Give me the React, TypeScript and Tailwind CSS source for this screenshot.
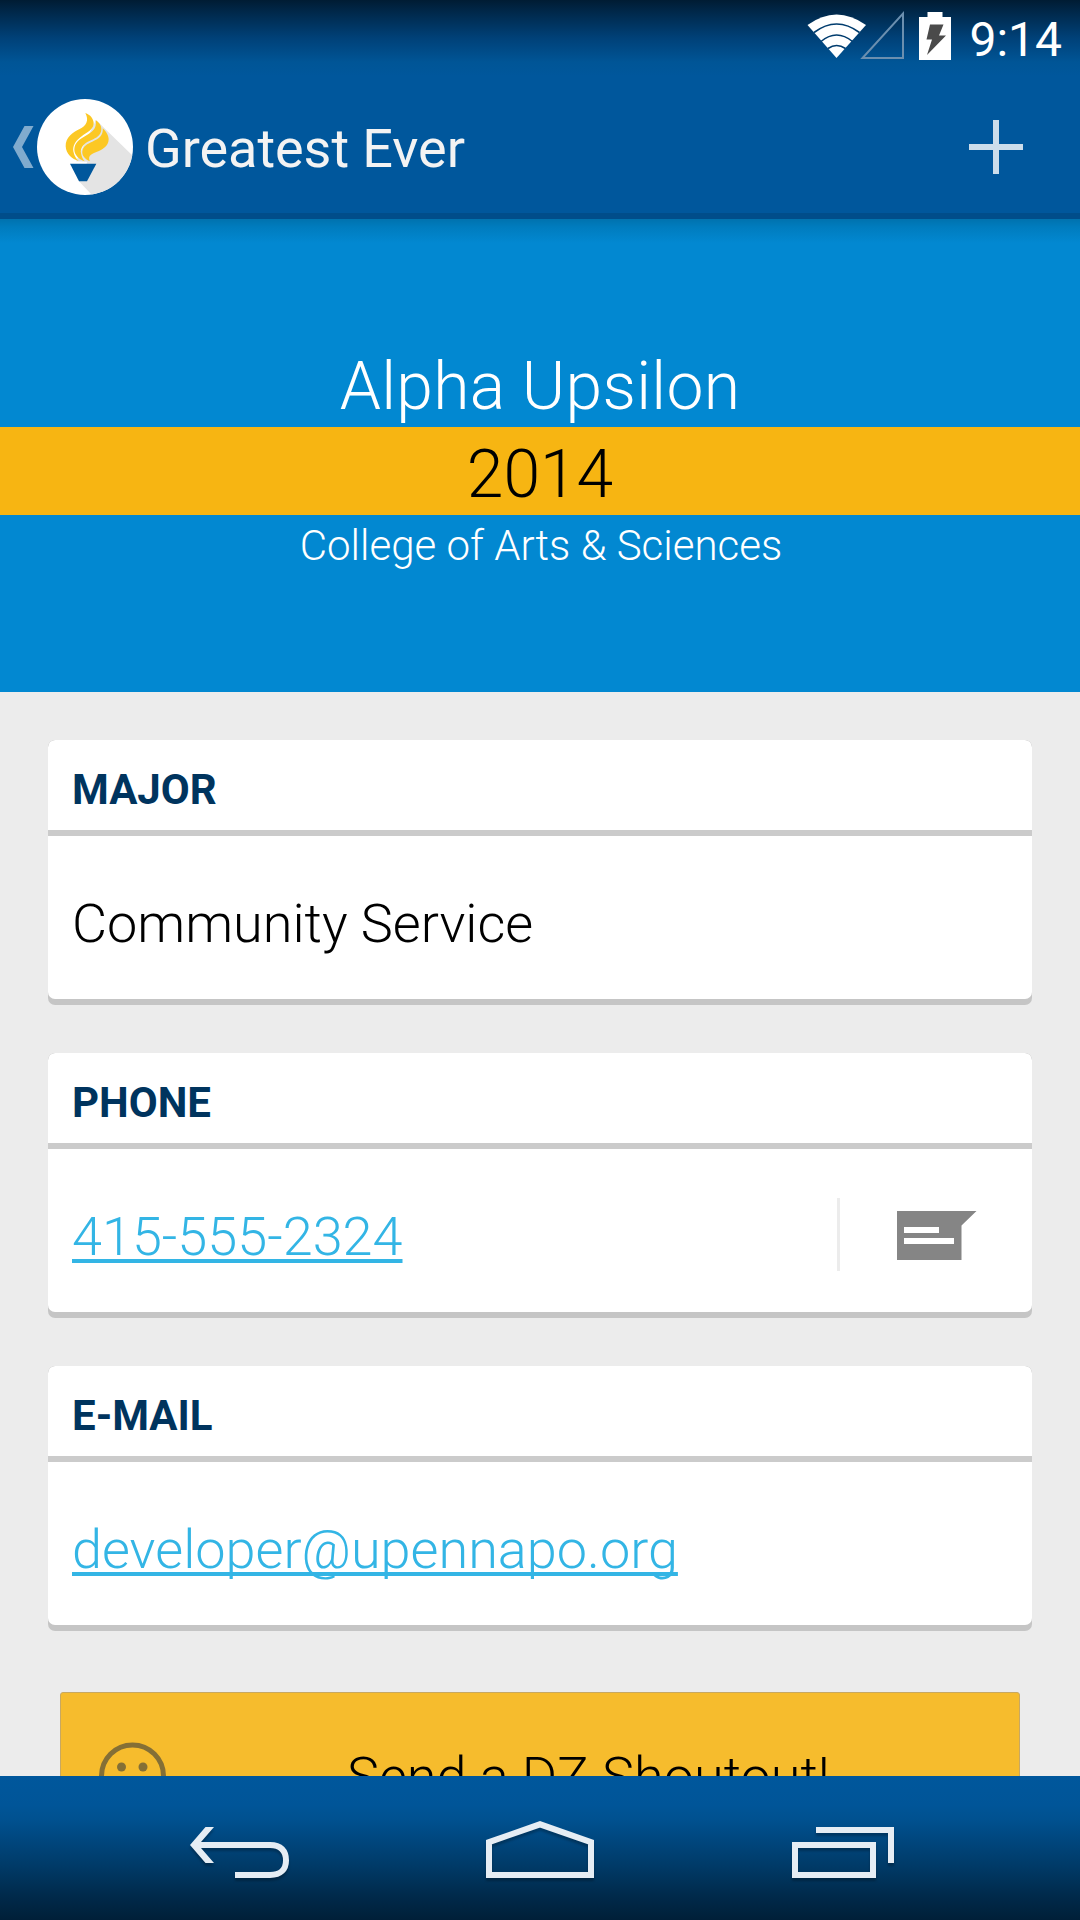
import type { ReactNode } from "react";

function StatusBar() {
  return (
    <div className="flex h-[75px] shrink-0 items-start justify-end pr-[18px]">
      <svg className="h-[75px] w-[164px]" viewBox="800 0 164 75">
        <path d="M836.5 58L807.5 25Q836.5 4 866 25Z" fill="#fff" />
        <g fill="none" stroke="#003c6e" strokeWidth="1.6">
          <path d="M814 32.5Q836.5 15.500 859.500 32.500" />
          <path d="M821 41.500Q836.500 28.500 852.500 41.500" />
          <path d="M828 48.500Q836.500 42.500 845.500 48.500" />
        </g>
        <path d="M903 13.500V58H862.500Z" fill="none" stroke="#6b8faf" strokeWidth="2" />
        <path d="M927.500 12H942.500V17H951V60H919V17H927.500Z" fill="#fff" />
        <path d="M930 24.500H943.500L939 35.500H946L927 55L932 39.500H926.500Z" fill="#4a4a4a" />
      </svg>
      <time className="mt-[5px] ml-[5px] text-[48px] leading-[70px] text-white">9:14</time>
    </div>
  );
}

function TorchLogo() {
  return (
    <svg className="h-[96px] w-[96px]" viewBox="111 27 288 288">
      <defs>
        <clipPath id="disc">
          <circle cx="255" cy="171" r="144" />
        </clipPath>
      </defs>
      <circle cx="255" cy="171" r="144" fill="#fff" />
      <path clipPath="url(#disc)" d="M288 90L420 218V330H290L237 274L262 215L228 214Z" fill="#e4e4e4" />
      <g fill="#fcc824">
        <path d="M256 69C270 73 283 88 281 103C279 119 262 127 246 138C227 151 217 167 220 184C222 197 229 207 236 213C216 208 198 191 197 169C196 142 219 126 239 117C259 108 268 91 256 69Z" />
        <path d="M287 91C300 99 307 111 303 125C298 140 283 146 270 152C251 160 240 174 243 190C245 201 249 208 254 214C238 209 222 195 223 178C224 158 239 147 256 138C277 127 291 116 287 91Z" />
        <path d="M308 115C317 123 326 136 326 148C326 169 305 181 289 186C268 193 264 202 270 214C255 208 245 196 247 183C249 169 262 161 277 155C295 147 311 137 308 115Z" />
      </g>
      <path d="M210 221H289L261 274H237Z" fill="#00579c" />
    </svg>
  );
}

function ActionBar() {
  return (
    <header className="flex h-[144px] shrink-0 items-center border-b-[6px] border-[#004d8a] pt-[6px] pr-[57px] pl-[12px]">
      <svg className="h-[44px] w-[25px]" viewBox="12 125 25 44">
        <path d="M24.500 126H33.500L22 147L33.500 168H24.500L13 147Z" fill="#80abce" />
      </svg>
      <TorchLogo />
      <h1 className="ml-[12px] pt-[4px] text-[54px] leading-[64px] tracking-[-0.05px] text-[#f3f3f3]">Greatest Ever</h1>
      <svg className="ml-auto h-[54px] w-[54px]" viewBox="0 0 54 54">
        <path d="M0 27H54M27 0V54" stroke="#ccddeb" strokeWidth="6" />
      </svg>
    </header>
  );
}

function Hero() {
  return (
    <section className="flex h-[473px] shrink-0 flex-col bg-[linear-gradient(to_bottom,#0072ae_0px,#007cbe_8px,#0288d1_24px)] pt-[124px] text-center font-light text-white">
      <div className="h-[84px] text-[66px] leading-[88px] tracking-[0.3px]">Alpha Upsilon</div>
      <div className="h-[88px] bg-[#f7b512] text-[66px] leading-[96px] text-black">2014</div>
      <div className="pl-[2px] text-[42px] leading-[62px]">College of Arts &amp; Sciences</div>
    </section>
  );
}

function Card({ title, children }: { title: string; children: ReactNode }) {
  return (
    <section className="h-[265px] shrink-0 overflow-hidden rounded-[7px] bg-[#c5c5c5] pb-[6px]">
      <div className="flex h-full flex-col overflow-hidden rounded-[7px] bg-white">
        <h2 className="h-[96px] border-b-[6px] border-[#cbcbcb] px-[24px] pt-[1px] text-[42px] leading-[97px] font-bold text-[#00345e]">
          {title}
        </h2>
        <div className="flex flex-1 items-center px-[24px] pt-[12px] text-[54px] leading-[70px] font-light">{children}</div>
      </div>
    </section>
  );
}

function LinkText({ href, children }: { href: string; children: ReactNode }) {
  return (
    <a
      href={href}
      className="text-[#33b5e5] underline decoration-[3.5px] underline-offset-[4px] [text-decoration-skip-ink:none]"
    >
      {children}
    </a>
  );
}

function MessageIcon() {
  return (
    <svg className="h-[49px] w-[80px]" viewBox="0 0 80 49">
      <path d="M0 0H79.500L64.500 14.500V49H0Z" fill="#858585" />
      <path d="M7 19H42M7 30H57" stroke="#fff" strokeWidth="6" />
    </svg>
  );
}

function NavBar() {
  return (
    <nav className="h-[144px] shrink-0 bg-[linear-gradient(to_bottom,#00579c_0%,#005598_20%,#005190_30%,#003a67_63%,#002a4b_83%,#001f38_100%)]">
      <svg
        className="h-[144px] w-[1080px] drop-shadow-[0_3px_1px_rgba(0,0,0,0.25)]"
        viewBox="0 1776 1080 144"
        fill="none"
        stroke="#e6edf4"
        strokeWidth="6"
      >
        <path d="M198 1845H270C281 1845 286 1851 286 1860.500C286 1869 281 1875 270 1875H235" />
        <path d="M205.500 1827H214L201 1842V1848L214 1863H205.500L190 1845Z" fill="#e6edf4" stroke="none" />
        <path d="M489 1842.200L540 1824.300L591 1842.200V1875H489Z" />
        <path d="M795 1845H873V1875H795ZM816 1830H891V1863" />
      </svg>
    </nav>
  );
}

export default function App() {
  return (
    <div className="flex h-[1920px] w-[1080px] flex-col overflow-hidden bg-[#ececec] font-['Roboto',sans-serif]">
      <div className="shrink-0 bg-[linear-gradient(to_bottom,#001c33_0px,#00284a_12px,#004178_38px,#005596_62px,#00579c_76px)]">
        <StatusBar />
        <ActionBar />
      </div>
      <Hero />
      <main className="flex min-h-0 flex-1 flex-col gap-[48px] overflow-hidden px-[48px] pt-[48px]">
        <Card title="MAJOR">Community Service</Card>
        <Card title="PHONE">
          <LinkText href="tel:4155552324">415-555-2324</LinkText>
          <div className="-mt-[5px] mr-[31px] ml-auto flex items-center">
            <div className="mr-[57px] h-[73px] w-[3px] bg-[#ececec]" />
            <div className="pt-[3px]">
              <MessageIcon />
            </div>
          </div>
        </Card>
        <Card title="E-MAIL">
          <LinkText href="mailto:developer@upennapo.org">developer@upennapo.org</LinkText>
        </Card>
        <button className="mx-[12px] mt-[13px] flex h-[168px] shrink-0 items-center rounded-[3px] border border-[#c8a861] bg-[#f6bc2d] pl-[37px] text-[54px] font-light">
          <svg className="h-[70px] w-[70px] shrink-0" viewBox="0 0 70 70" fill="none" stroke="#846f36">
            <circle cx="34.500" cy="35" r="31" strokeWidth="5" />
            <path d="M20 44Q34.500 58 49 44" strokeWidth="5" />
            <g fill="#846f36" stroke="none">
              <circle cx="23.500" cy="26" r="4.500" />
              <circle cx="45" cy="26" r="4.500" />
            </g>
          </svg>
          <span className="flex-1 pt-[1px] pr-[10px] text-center">Send a DZ Shoutout!</span>
        </button>
      </main>
      <NavBar />
    </div>
  );
}
